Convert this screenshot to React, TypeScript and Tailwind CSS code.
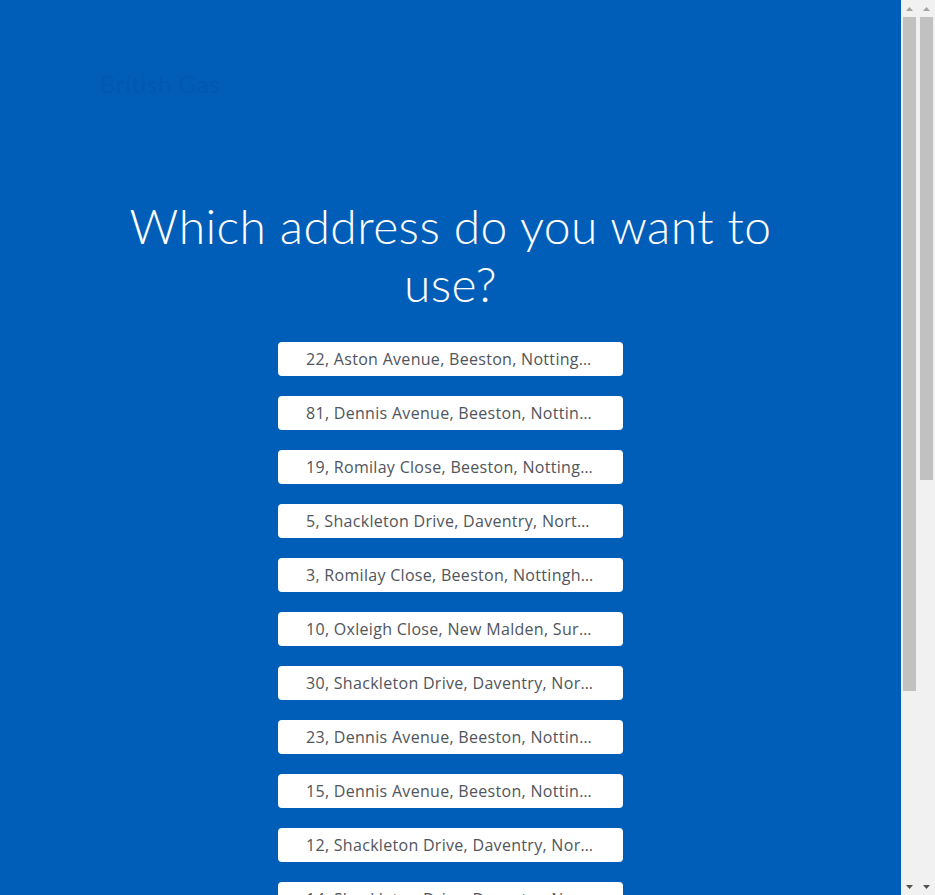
const ADDRESSES = [
  "22, Aston Avenue, Beeston, Nottingham, NG9 2RS",
  "81, Dennis Avenue, Beeston, Nottingham, NG9 2RT",
  "19, Romilay Close, Beeston, Nottingham, NG9 2SA",
  "5, Shackleton Drive, Daventry, Northamptonshire, NN11 4RS",
  "3, Romilay Close, Beeston, Nottingham, NG9 2SA",
  "10, Oxleigh Close, New Malden, Surrey, KT3 6PQ",
  "30, Shackleton Drive, Daventry, Northamptonshire, NN11 4RS",
  "23, Dennis Avenue, Beeston, Nottingham, NG9 2RT",
  "15, Dennis Avenue, Beeston, Nottingham, NG9 2RT",
  "12, Shackleton Drive, Daventry, Northamptonshire, NN11 4RS",
  "14, Shackleton Drive, Daventry, Northamptonshire, NN11 4RS",
  "7, Oxleigh Close, New Malden, Surrey, KT3 6PQ",
  "41, Aston Avenue, Beeston, Nottingham, NG9 2RS",
  "2, Romilay Close, Beeston, Nottingham, NG9 2SA",
]

// classic scrollbar, drawn since the page shows two of them side by side
const Scrollbar = ({ thumbClass }: { thumbClass: string }) => (
  <div className="w-[17px] h-full bg-[#f1f1f1] flex flex-col shrink-0">
    <div className="h-[17px] flex items-center justify-center">
      <svg width="7" height="4" viewBox="0 0 7 4">
        <path d="M3.5 0L7 4H0Z" fill="#a3a3a3" />
      </svg>
    </div>
    <div className="flex-1 px-[2px]">
      <div className={`bg-[#c1c1c1] ${thumbClass}`} />
    </div>
    <div className="h-[17px] flex items-center justify-center">
      <svg width="7" height="4" viewBox="0 0 7 4">
        <path d="M0 0H7L3.5 4Z" fill="#505050" />
      </svg>
    </div>
  </div>
)

const App = () => {
  return (
    <div className="flex h-[895px] overflow-hidden">
      <div className="flex-1 min-w-0 bg-[#005eb8] font-['Lato','Open_Sans',sans-serif]">
        <header className="pl-[100px] pt-[70px] h-[110px]">
          <span className="text-[24px] leading-[28px] text-[#0059b1] tracking-wide">
            British Gas
          </span>
        </header>

        <main className="flex flex-col items-center pt-[87px] pb-[67px]">
          <h1 className="max-w-[700px] text-center text-white text-[48px] leading-[1.2] font-light tracking-[0.4px]">
            Which address do you want to use?
          </h1>

          <ul className="mt-[30px] flex flex-col gap-5">
            {ADDRESSES.map((address) => (
              <li key={address}>
                <button className="w-[345px] h-[34px] px-[28px] bg-white rounded text-[#50555c] text-base tracking-[0.3px] font-['Open_Sans',sans-serif] text-center truncate">
                  {address}
                </button>
              </li>
            ))}
          </ul>
        </main>
      </div>
      <Scrollbar thumbClass="h-[674px]" />
      <Scrollbar thumbClass="h-[463px]" />
    </div>
  )
}

export default App
